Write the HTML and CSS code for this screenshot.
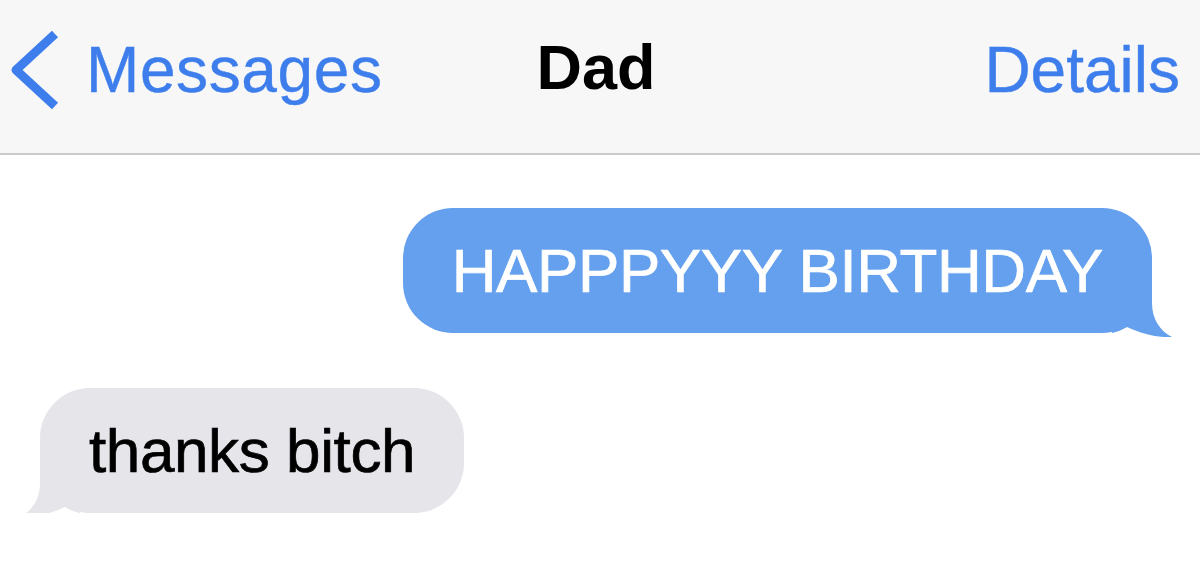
FILE: index.html
```html
<!DOCTYPE html>
<html lang="en">

<head>
    <meta charset="UTF-8">
    <meta name="viewport" content="width=device-width, initial-scale=1.0">
    <title>Dad</title>

    <link rel="stylesheet" href="styles.css">
</head>

<body>
    <div class="navbar">
        <div class="back">
            <svg class="chevron" width="50" height="80" viewBox="0 0 50 80">
                <polyline points="45,4 6,40 45,76" fill="none" stroke="#3d7eec" stroke-width="9"
                    stroke-linejoin="round" />
            </svg>
            <span>Messages</span>
        </div>
        <div class="title">Dad</div>
        <div class="details">Details</div>
    </div>

    <div class="thread">
        <div class="row sent">
            <div class="bubble blue">
                HAPPPYYY BIRTHDAY
                <svg class="tail" width="60" height="60" viewBox="0 0 60 60">
                    <path d="M0 0 H40 V26 C40 42 48 54 60 60 C47 61 30 57 15 50 C10 53 5 55 0 56 Z" />
                </svg>
            </div>
        </div>

        <div class="row received">
            <div class="bubble gray">
                thanks bitch
                <svg class="tail" width="60" height="60" viewBox="0 0 60 60">
                    <path d="M0 0 H40 V26 C40 42 48 54 60 60 C47 61 30 57 15 50 C10 53 5 55 0 56 Z" />
                </svg>
            </div>
        </div>
    </div>
</body>

</html>
```

FILE: styles.css
```css
body {
    margin: 0;
    background: #fff;
    font-family: "Liberation Sans", Arial, Helvetica, sans-serif;
}

.navbar {
    display: grid;
    grid-template-columns: 1fr auto 1fr;
    align-items: center;
    height: 139px;
    padding: 0 20px 14px 6px;
    background-color: #f7f7f8;
    border-bottom: 2px solid #cbcbce;
    font-size: 64px;
    -webkit-text-stroke: 0.4px currentColor;
}

.back {
    display: flex;
    align-items: center;
    color: #3d7eec;
    letter-spacing: 0.6px;
}

.chevron {
    display: block;
    margin: 0 26px 0 4px;
}

.title {
    font-weight: bold;
    font-size: 63px;
    color: #000;
    margin: -5px 0 0 6px;
    -webkit-text-stroke: 0;
}

.details {
    text-align: right;
    color: #3d7eec;
}

.thread {
    padding-top: 53px;
}

.row {
    display: flex;
}

.row.sent {
    justify-content: flex-end;
    padding-right: 48px;
}

.row.received {
    margin-top: 55px;
    padding-left: 40px;
}

.bubble {
    position: relative;
    height: 125px;
    line-height: 125px;
    padding: 0 49px;
    border-radius: 50px;
    font-size: 62px;
    letter-spacing: -0.4px;
    white-space: nowrap;
    -webkit-text-stroke: 0.7px currentColor;
}

.bubble.blue {
    background-color: #64a0ee;
    color: #fff;
}

.bubble.gray {
    background-color: #e5e5ea;
    color: #000;
}

.tail {
    position: absolute;
    bottom: -4px;
    display: block;
}

.blue .tail {
    right: -20px;
    fill: #64a0ee;
}

.gray .tail {
    left: -20px;
    transform: scaleX(-1);
    fill: #e5e5ea;
}
```
